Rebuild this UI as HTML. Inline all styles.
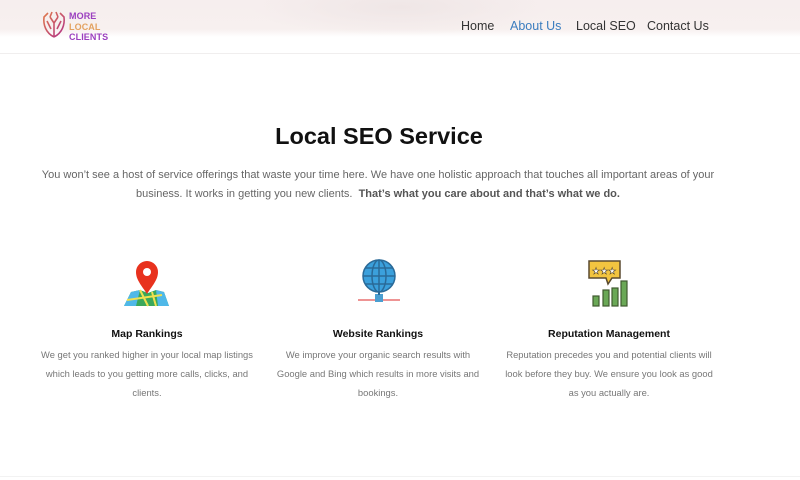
<!DOCTYPE html>
<html><head><meta charset="utf-8">
<style>
*{margin:0;padding:0;box-sizing:border-box}
body{width:800px;height:480px;overflow:hidden;background:#fff;font-family:"Liberation Sans",sans-serif;position:relative}
.hdr{position:absolute;left:0;top:0;width:800px;height:54px;background:linear-gradient(180deg,#f6eeee 0%,#f7f0ef 55%,#fff 70%,#fff 100%);border-bottom:1px solid #f0eeee}
.hdr:before{content:"";position:absolute;left:250px;top:0;width:300px;height:36px;background:radial-gradient(ellipse at 50% 20%,#efe6e6,transparent 70%)}
.logo{position:absolute;left:42px;top:9px}
.lt{position:absolute;left:69px;top:11px;font-size:9px;font-weight:bold;line-height:10.5px;letter-spacing:.1px}
.nav{position:absolute;top:19px;font-size:12.5px;color:#333}
h1{position:absolute;left:0;width:758px;top:123px;text-align:center;font-size:23.5px;font-weight:bold;color:#111}
.intro{position:absolute;left:40px;width:676px;top:166px;text-align:center;font-size:11px;line-height:19px;color:#666}
.intro b{color:#555}
.col{position:absolute;top:328px;width:216px;text-align:center}
.col h3{font-size:10.5px;font-weight:bold;color:#111;margin-bottom:5px}
.col p{font-size:9.4px;line-height:19px;color:#777}
.ic{position:absolute}
.foot{position:absolute;left:0;top:476px;width:800px;height:1px;background:#f2f2f2}
</style></head><body>
<div class="hdr">
 <svg class="logo" width="24" height="30" viewBox="0 0 24 30" fill="none" stroke-width="1.6">
  <defs><linearGradient id="g" x1="0" y1="0" x2="1" y2="1"><stop offset="0" stop-color="#e07a4a"/><stop offset="1" stop-color="#b0308a"/></linearGradient></defs>
  <path d="M12 28C4 24 1 16 2 8L6 4M12 28C20 24 23 16 22 8L18 4M12 28V14M12 14L8 8M12 14L16 8M8 8L10 3M16 8L14 3M5 12L9 20M19 12L15 20" stroke="url(#g)"/>
 </svg>
 <div class="lt"><span style="color:#9b3fbf">MORE</span><br><span style="color:#e3a260">LOCAL</span><br><span style="color:#9b3fbf">CLIENTS</span></div>
 <div class="nav" style="left:461px">Home</div>
 <div class="nav" style="left:510px;color:#3b7dbf">About Us</div>
 <div class="nav" style="left:576px">Local SEO</div>
 <div class="nav" style="left:647px">Contact Us</div>
</div>
<h1>Local SEO Service</h1>
<div class="intro">You won’t see a host of service offerings that waste your time here. We have one holistic approach that touches all important areas of your business. It works in getting you new clients.&nbsp; <b>That’s what you care about and that’s what we do.</b></div>

<svg class="ic" style="left:122px;top:258px" width="50" height="50" viewBox="0 0 50 50">
 <polygon points="9,34 18,32 26,35 34,32 42,34 47,48 2,48" fill="#3aa85a"/>
 <polygon points="9,34 18,32 14,48 2,48" fill="#4fb8e8"/>
 <polygon points="34,32 42,34 47,48 36,48" fill="#4fb8e8"/>
 <path d="M5 42L40 37M18 32L26 48M30 34L34 48" stroke="#f0e050" stroke-width="2"/>
 <path d="M25 36C20 28 14 22 14 14A11 11 0 0 1 36 14C36 22 30 28 25 36Z" fill="#e8321e"/>
 <circle cx="25" cy="14" r="4" fill="#fff"/>
</svg>
<svg class="ic" style="left:356px;top:258px" width="46" height="50" viewBox="0 0 46 50">
 <line x1="2" y1="42" x2="44" y2="42" stroke="#e87070" stroke-width="1.5"/>
 <rect x="19" y="36" width="8" height="8" fill="#4a9ed0"/>
 <line x1="23" y1="32" x2="23" y2="37" stroke="#2a6a98" stroke-width="2"/>
 <circle cx="23" cy="18" r="16" fill="#3ba0dc" stroke="#2a6a98" stroke-width="1.5"/>
 <ellipse cx="23" cy="18" rx="7" ry="16" fill="none" stroke="#2a6a98" stroke-width="1.5"/>
 <path d="M7 18H39M9 10H37M9 26H37M23 2V34" stroke="#2a6a98" stroke-width="1.5"/>
</svg>
<svg class="ic" style="left:586px;top:258px" width="46" height="52" viewBox="0 0 46 52">
 <path d="M3 3H34V20H26L22 26L20 20H3Z" fill="#f2c440" stroke="#5a4a30" stroke-width="1.5"/>
 <text x="6" y="16" font-size="9" fill="#fff" stroke="#5a4a30" stroke-width=".6" font-family="DejaVu Sans">★★★</text>
 <rect x="7" y="38" width="6" height="10" fill="#6aa856" stroke="#3f5a30" stroke-width="1.2"/>
 <rect x="17" y="32" width="6" height="16" fill="#6aa856" stroke="#3f5a30" stroke-width="1.2"/>
 <rect x="26" y="30" width="6" height="18" fill="#6aa856" stroke="#3f5a30" stroke-width="1.2"/>
 <rect x="35" y="23" width="6" height="25" fill="#6aa856" stroke="#3f5a30" stroke-width="1.2"/>
</svg>

<div class="col" style="left:39px"><h3>Map Rankings</h3><p>We get you ranked higher in your local map listings which leads to you getting more calls, clicks, and clients.</p></div>
<div class="col" style="left:270px"><h3>Website Rankings</h3><p>We improve your organic search results with Google and Bing which results in more visits and bookings.</p></div>
<div class="col" style="left:501px"><h3>Reputation Management</h3><p>Reputation precedes you and potential clients will look before they buy. We ensure you look as good as you actually are.</p></div>
<div class="foot"></div>
</body></html>
